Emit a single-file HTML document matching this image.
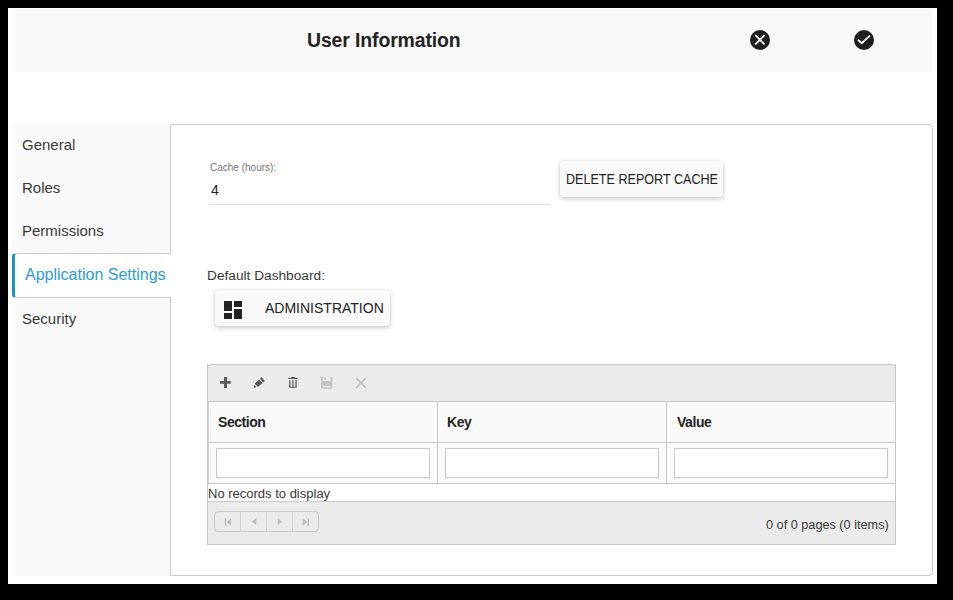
<!DOCTYPE html>
<html><head><meta charset="utf-8">
<style>
*{box-sizing:border-box;margin:0;padding:0}
html,body{width:953px;height:600px;background:#000;overflow:hidden;font-family:"Liberation Sans",sans-serif;color:#333}
.a{position:absolute}
#dlg{left:8px;top:8px;width:929px;height:576px;background:#fff}
#hdr{left:13px;top:9px;width:919px;height:63px;background:#f9f9f9}
#title{left:307px;top:29px;font-weight:bold;font-size:19.4px;letter-spacing:-0.1px;color:#222;white-space:nowrap;line-height:22px}
.ic{width:20px;height:20px}
#side{left:12px;top:124px;width:159px;height:452px;background:#fafafa}
#panel{left:170px;top:124px;width:763px;height:452px;border:1px solid #cbcbcb;border-radius:0 4px 4px 0;background:#fff}
.tab{left:22px;font-size:15px;line-height:18px;color:#383838;white-space:nowrap}
#act{left:12px;top:253px;width:159px;height:45px;background:#fff;border:1px solid #cbcbcb;border-right:none;border-left:3px solid #1b8fd2;border-radius:4px 0 0 4px}
#acttxt{left:25px;top:266px;font-size:16px;line-height:18px;color:#2b9ce0;white-space:nowrap}
.btn{background:#fafafa;border-radius:3px;box-shadow:0 2px 5px rgba(0,0,0,.2),0 0 1.5px rgba(0,0,0,.16)}

.lbl{font-size:10px;line-height:10px;color:#787878;white-space:nowrap}
.t13{font-size:13px;line-height:13px;white-space:nowrap;color:#383838}
.grid{left:207px;top:365px;width:689px;height:180px;border:1px solid #c8c8c8;border-top:none;background:#fff}
.tb{left:207px;top:364px;width:689px;height:38px;border-radius:4px 4px 0 0;background:#ebebeb;border:1px solid #c8c8c8}
.hrow{left:208px;top:402px;width:687px;height:41px;background:#fafafa;border-left:1px solid #d2d2d2;border-bottom:1px solid #c8c8c8}
.frow{left:208px;top:443px;width:687px;height:41px;background:#fafafa;border-left:1px solid #d2d2d2;border-bottom:1px solid #c8c8c8}
.vline{width:1px;background:#c8c8c8}
.hdtxt{font-weight:bold;font-size:14px;line-height:14px;letter-spacing:-0.45px;color:#222;white-space:nowrap}
.inp{height:30px;background:#fff;border:1px solid #c8c8c8}
.foot{left:208px;top:501px;width:687px;height:43px;background:#ebebeb;border-top:1px solid #c8c8c8}
.pager{left:214px;top:511px;width:105px;height:21px;border:1px solid #c8c8c8;border-radius:4px}
</style></head><body>
<div class="a" id="dlg"></div>
<div class="a" id="hdr"></div>
<div class="a" id="title">User Information</div>
<svg class="a ic" style="left:750px;top:30px" viewBox="0 0 20 20"><circle cx="10" cy="10" r="10" fill="#1e1e1e"/><path d="M5.3 5.2L14.5 14.4M14.5 5.2L5.3 14.4" stroke="#fff" stroke-width="1.8"/></svg>
<svg class="a ic" style="left:854px;top:30px" viewBox="0 0 20 20"><circle cx="10" cy="10" r="10" fill="#1e1e1e"/><path d="M3.9 9.7L7.8 13.3L15.9 5.6" stroke="#fff" stroke-width="1.9" fill="none"/></svg>

<div class="a" id="side"></div>
<div class="a" id="panel"></div>
<div class="a tab" style="top:136px">General</div>
<div class="a tab" style="top:179px">Roles</div>
<div class="a tab" style="top:222px">Permissions</div>
<div class="a" id="act"></div>
<div class="a" id="acttxt">Application Settings</div>
<div class="a tab" style="top:310px">Security</div>


<div class="a lbl" style="left:210px;top:163px">Cache (hours):</div>
<div class="a" style="left:211px;top:183px;font-size:14px;line-height:14px;color:#222">4</div>
<div class="a" style="left:209px;top:204px;width:341px;height:1px;background:#dcdcdc"></div>
<div class="a btn" style="left:560px;top:161px;width:163px;height:36px"></div>
<div class="a" style="left:566px;top:173px;font-size:13.8px;line-height:14px;color:#222;white-space:nowrap;transform:scaleX(0.912);transform-origin:0 0">DELETE REPORT CACHE</div>

<div class="a t13" style="left:207px;top:269px;font-size:13.7px">Default Dashboard:</div>
<div class="a btn" style="left:215px;top:290px;width:175px;height:36px"></div>
<svg class="a" style="left:224px;top:301px;width:18px;height:18px" viewBox="0 0 18 18"><path d="M0 0h8v10H0zM0 12h8v6H0zM10 0h8v6h-8zM10 8h8v10h-8z" fill="#222"/></svg>
<div class="a" style="left:265px;top:301px;font-size:14px;line-height:14px;color:#222;white-space:nowrap">ADMINISTRATION</div>

<div class="a grid"></div>
<div class="a tb"></div>
<div class="a vline" style="left:207px;top:364px;height:6px"></div>
<div class="a vline" style="left:895px;top:364px;height:6px"></div>
<div class="a hrow"></div>
<div class="a frow"></div>
<div class="a vline" style="left:437px;top:402px;height:82px"></div>
<div class="a vline" style="left:666px;top:402px;height:82px"></div>
<div class="a hdtxt" style="left:218px;top:415px">Section</div>
<div class="a hdtxt" style="left:447px;top:415px">Key</div>
<div class="a hdtxt" style="left:677px;top:415px">Value</div>
<div class="a inp" style="left:216px;top:448px;width:214px"></div>
<div class="a inp" style="left:445px;top:448px;width:214px"></div>
<div class="a inp" style="left:674px;top:448px;width:214px"></div>
<div class="a t13" style="left:208px;top:487px">No records to display</div>
<div class="a foot"></div>
<div class="a pager"></div>
<div class="a vline" style="left:240px;top:512px;height:19px;background:#d4d4d4"></div>
<div class="a vline" style="left:266px;top:512px;height:19px;background:#d4d4d4"></div>
<div class="a vline" style="left:292px;top:512px;height:19px;background:#d4d4d4"></div>
<div class="a t13" style="left:766px;top:519px;font-size:12.7px">0 of 0 pages (0 items)</div>

<svg class="a" style="left:219px;top:377px;width:12px;height:11px" viewBox="0 0 12 11"><path d="M5 0h3v11H5zM1 4h10.8v2.8H1z" fill="#5a5a5a"/></svg>
<svg class="a" style="left:253px;top:377px;width:13px;height:12px" viewBox="0 0 13 12"><g transform="translate(1.2 10.2) rotate(-42)" fill="#555"><path d="M0 -0.6L1.9 -1.4V1.4L0 0.6z"/><rect x="2.9" y="-2.4" width="5.9" height="4.8"/><rect x="9.9" y="-2.4" width="2.2" height="4.8"/></g></svg>
<svg class="a" style="left:288px;top:376px;width:10px;height:12px" viewBox="0 0 10 12"><path d="M3.2 0.9h3.6v0.9H3.2zM0.3 1.7h9.1v1.3H0.3zM1.1 4.2h1.3v7.6H1.1zM4.25 4.2h1.3v7.6H4.25zM7.4 4.2h1.3v7.6H7.4zM1.1 10.7h7.6v1.1H1.1z" fill="#5a5a5a"/></svg>
<svg class="a" style="left:321px;top:377px;width:12px;height:12px" viewBox="0 0 12 12"><path d="M0 0h11.4v11.7H0zM1.7 0h7.9v3.9H1.7zM1.9 9h7.7v1.2H1.9zM3 0.6h2v2.2H3z" fill="#c4c4c4" fill-rule="evenodd"/></svg>
<svg class="a" style="left:355px;top:377px;width:12px;height:12px" viewBox="0 0 12 12"><path d="M1.2 1.2L10.8 10.8M10.8 1.2L1.2 10.8" stroke="#c2c2c2" stroke-width="1.9"/></svg>

<svg class="a" style="left:224px;top:517px;width:8px;height:10px" viewBox="0 0 8 10"><path d="M0.8 0.9h1.5v8H0.8zM2.8 4.9L7.1 0.9V8.9z" fill="#bdbdbd"/></svg>
<svg class="a" style="left:252px;top:517px;width:6px;height:10px" viewBox="0 0 6 10"><path d="M0.1 4.6L4.3 1.1V8.1z" fill="#bdbdbd"/></svg>
<svg class="a" style="left:277px;top:517px;width:6px;height:10px" viewBox="0 0 6 10"><path d="M0.8 1.1V8.1L5 4.6z" fill="#bdbdbd"/></svg>
<svg class="a" style="left:302px;top:517px;width:8px;height:10px" viewBox="0 0 8 10"><path d="M5.6 0.9h1.5v8H5.6zM0.7 0.9V8.9L5 4.9z" fill="#bdbdbd"/></svg>
</body></html>
